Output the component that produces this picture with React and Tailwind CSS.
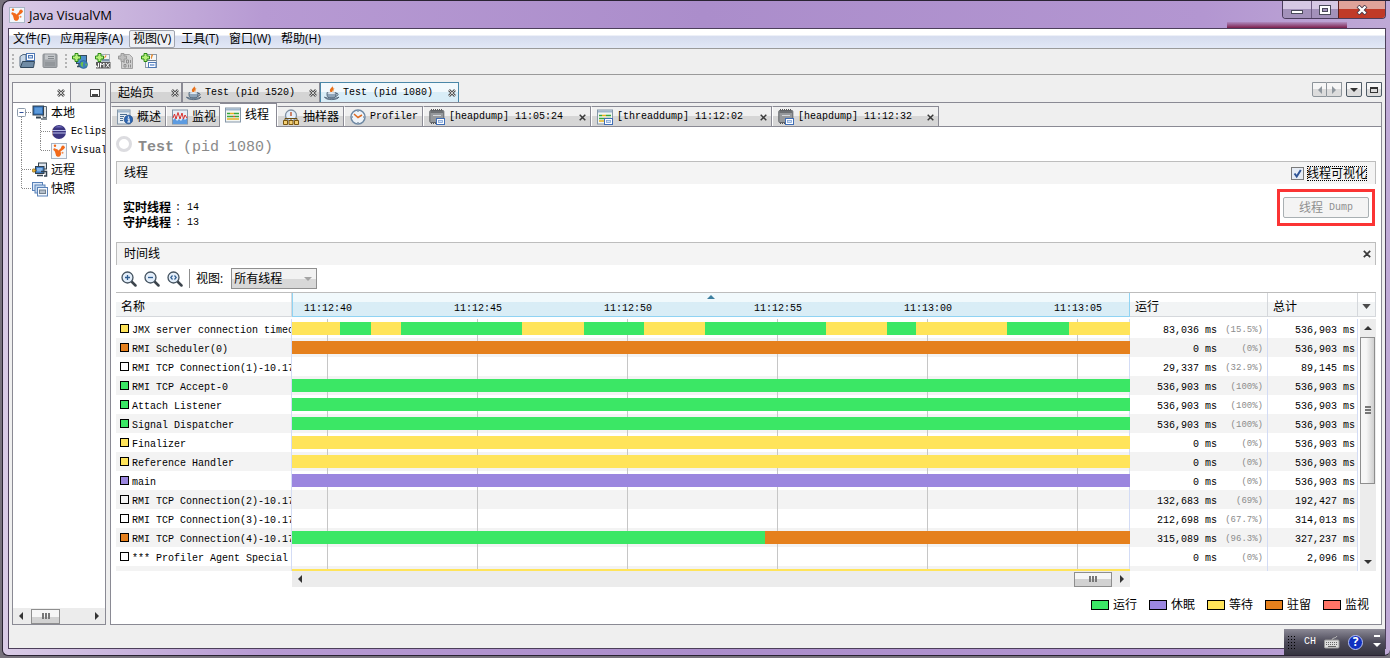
import { Fragment } from 'react';

const COLORS = {
  running: '#3be765',
  sleeping: '#9b86df',
  wait: '#ffe45a',
  park: '#e5801d',
  monitor: '#ff7466',
  none: 'transparent',
};

const JMX_SEGMENTS = [
  ['wait', 48], ['running', 31], ['wait', 30], ['running', 121], ['wait', 62], ['running', 60], ['wait', 61],
  ['running', 121], ['wait', 61], ['running', 29], ['wait', 91], ['running', 62], ['wait', 61],
];

const THREADS = [
  { name: 'JMX server connection timeout', state: 'wait', bar: JMX_SEGMENTS, run: '83,036', pct: '15.5%', total: '536,903' },
  { name: 'RMI Scheduler(0)', state: 'park', bar: [['park', 838]], run: '0', pct: '0%', total: '536,903' },
  { name: 'RMI TCP Connection(1)-10.17', state: 'none', bar: [], run: '29,337', pct: '32.9%', total: '89,145' },
  { name: 'RMI TCP Accept-0', state: 'running', bar: [['running', 838]], run: '536,903', pct: '100%', total: '536,903' },
  { name: 'Attach Listener', state: 'running', bar: [['running', 838]], run: '536,903', pct: '100%', total: '536,903' },
  { name: 'Signal Dispatcher', state: 'running', bar: [['running', 838]], run: '536,903', pct: '100%', total: '536,903' },
  { name: 'Finalizer', state: 'wait', bar: [['wait', 838]], run: '0', pct: '0%', total: '536,903' },
  { name: 'Reference Handler', state: 'wait', bar: [['wait', 838]], run: '0', pct: '0%', total: '536,903' },
  { name: 'main', state: 'sleeping', bar: [['sleeping', 838]], run: '0', pct: '0%', total: '536,903' },
  { name: 'RMI TCP Connection(2)-10.17', state: 'none', bar: [], run: '132,683', pct: '69%', total: '192,427' },
  { name: 'RMI TCP Connection(3)-10.17', state: 'none', bar: [], run: '212,698', pct: '67.7%', total: '314,013' },
  { name: 'RMI TCP Connection(4)-10.17', state: 'park', bar: [['running', 473], ['park', 365]], run: '315,089', pct: '96.3%', total: '327,237' },
  { name: '*** Profiler Agent Special', state: 'none', bar: [], run: '0', pct: '0%', total: '2,096' },
  { name: '', state: null, bar: [['wait', 838]], run: '', pct: '', total: '' },
];

const TICKS = ['11:12:40', '11:12:45', '11:12:50', '11:12:55', '11:13:00', '11:13:05'];

const LEGEND = [
  ['运行', 'running'],
  ['休眠', 'sleeping'],
  ['等待', 'wait'],
  ['驻留', 'park'],
  ['监视', 'monitor'],
];

const MENUS = ['文件(F)', '应用程序(A)', '视图(V)', '工具(T)', '窗口(W)', '帮助(H)'];

/* ---------- icons ---------- */

function Icon({ children, className = 'size-4' }) {
  return (
    <svg viewBox="0 0 16 16" className={`${className} shrink-0`} aria-hidden="true">
      {children}
    </svg>
  );
}

function VisualVmIcon() {
  return (
    <Icon>
      <rect x=".5" y=".5" width="15" height="15" fill="#f4f8fc" stroke="#a9b6c6" />
      <path d="M3 6.500L6 6l1.500 1.500L11 4l2.500 0-.5 2-3.500 2.500.5 2.500-1.500 2.500-2.500 0-1-2z" fill="#f26a1b" />
      <circle cx="4" cy="2.800" r="1.200" fill="#f26a1b" />
      <circle cx="12" cy="4.300" r="1.700" fill="#f26a1b" />
      <circle cx="7.200" cy="11" r="2.500" fill="#f26a1b" />
      <circle cx="11.500" cy="9.800" r="1" fill="#f58a4b" />
      <circle cx="3.600" cy="6.500" r="1.200" fill="#f26a1b" />
    </Icon>
  );
}

function JavaIcon() {
  return (
    <Icon>
      <path d="M8 0c2 2-3 3.500-2 6 .3 1 1 1.500 1.500 2C8 6 11 4 9 2.500z" fill="#e8701a" />
      <path d="M10.500 3c-2 1.500-2.500 3-1.500 4.500z" fill="#f0a050" />
      <path d="M3 7.500h9v2.500c0 2-1.500 3-4.500 3S3 12 3 10z" fill="#8fa5b9" stroke="#43586d" strokeWidth=".8" />
      <path d="M12 8.300c3-.5 2.500 2.700-.5 3" fill="none" stroke="#43586d" strokeWidth="1" />
      <ellipse cx="7.500" cy="8" rx="4" ry="1" fill="#dfe8f0" />
      <path d="M.500 12c1 3.500 13 3.500 14.500 0-2 1.600-12 1.800-14.500 0z" fill="#a3b6c7" stroke="#43586d" strokeWidth=".8" />
    </Icon>
  );
}

function Plus() {
  return <path d="M3 .5h3v2.500h2.500v3H6v2.500H3V6H.5V3H3z" fill="#b6f07a" stroke="#2c8a16" strokeWidth="1" />;
}

function OpenIcon() {
  return (
    <Icon>
      <path d="M1 3.500L4 1.500h3v12H1z" fill="#c6d6e6" stroke="#54697e" />
      <rect x="7.500" y=".5" width="8" height="7" fill="#fff" stroke="#4e78b5" />
      <rect x="9.500" y="2.500" width="4" height="2.500" fill="#cfe0f6" stroke="#4e78b5" />
      <path d="M1.500 14.500L3.500 8.500h12l-1 6z" fill="#6f8ba5" stroke="#30475c" />
    </Icon>
  );
}

function SaveIcon() {
  return (
    <Icon>
      <rect x="1" y="1" width="14" height="13.500" rx="1" fill="#a0a4a8" stroke="#8a8e92" />
      <rect x="3" y="1.500" width="10" height="5" fill="#c3c6c9" />
      <path d="M6 3.500h6M6 5.500h6M3 10h10M3 12h10" stroke="#858a8e" />
    </Icon>
  );
}

function AddHostIcon() {
  return (
    <Icon>
      <rect x="4.500" y="2.500" width="10" height="8" fill="#4b8ecb" stroke="#33495e" />
      <path d="M5 13.500h5M7 11v2" stroke="#33495e" strokeWidth="1.500" />
      <circle cx="11.500" cy="11.500" r="4" fill="#3d7fbd" stroke="#275a8a" strokeWidth=".6" />
      <path d="M9 9.500c2-1.500 3 0 2 1.500s1 2-.5 3c-1.500-1-2.500-2.500-1.500-4.500zM13 10.500l2 .5-1 2.500z" fill="#6cc04a" />
      <Plus />
    </Icon>
  );
}

function AddJmxIcon() {
  return (
    <Icon>
      <rect x="4.500" y="1.500" width="10" height="8" fill="#f1f4f6" stroke="#a5afb8" />
      <path d="M10.500.5c2 1.500-2 2.500-1 5 2-1.500 2.500-3 1-5z" fill="#e88a2c" />
      <path d="M7 6h7v2.500H7z" fill="#7d95ab" />
      <rect x="1" y="9" width="14.500" height="6.500" fill="#5a5a5a" />
      <path d="M3.500 10v4h-2v-1.500M5.500 14.500V10l1.800 2L9 10v4.500M11 10l3.500 4.500M14.500 10L11 14.500" stroke="#fff" fill="none" />
      <Plus />
    </Icon>
  );
}

function AddDumpIcon() {
  return (
    <Icon>
      <path d="M3.500 1.500h8l3 3v11h-11z" fill="#cfcfcf" stroke="#a3a3a3" />
      <path d="M6 7v3M8.500 7h2v3h-2zM12.500 7v3M6 11.500h2v2.500H6zM10.500 11.500v3M12.500 11.500v3" stroke="#8f8f8f" fill="none" />
      <path d="M3 .5h3v2.500h2.500v3H6v2.500H3V6H.5V3H3z" fill="#bdbdbd" stroke="#9a9a9a" />
    </Icon>
  );
}

function AddSnapshotIcon() {
  return (
    <Icon>
      <rect x="4.500" y="1.500" width="11" height="13" fill="#f4f6f8" stroke="#8a98a6" />
      <path d="M11 1.500c1.500 1-1.500 2-.5 4z" fill="#e88a2c" stroke="#e88a2c" />
      <path d="M5 7.500h10" stroke="#6f7f90" />
      <rect x="7.500" y="9.500" width="7.500" height="5" fill="#fff" stroke="#4e78b5" />
      <rect x="9.500" y="11.500" width="3.500" height="1" fill="#cfe0f6" stroke="#7fa3d8" strokeWidth=".8" />
      <Plus />
    </Icon>
  );
}

function ComputerIcon() {
  return (
    <Icon>
      <path d="M11 1.500h3.500v11H11z" fill="#dfe3e6" stroke="#5a6772" />
      <rect x="1" y="1" width="10.500" height="9" fill="#2f6bb3" stroke="#33424f" />
      <rect x="2.500" y="2.500" width="7.500" height="6" fill="#5b9adb" />
      <path d="M4 12.500h5" stroke="#33424f" strokeWidth="2" />
      <path d="M9 14h6" stroke="#5a6772" strokeWidth="1.500" />
    </Icon>
  );
}

function EclipseIcon() {
  return (
    <Icon>
      <circle cx="8" cy="8" r="7" fill="#3b3580" />
      <path d="M3 3a7 7 0 0 0 0 10C1 11 1 5 3 3z" fill="#e0a24a" />
      <path d="M1 6.500h14M1 9h14" stroke="#b9bde8" strokeWidth="1.200" />
      <path d="M4 3.500c2-2 6-2 8 0z" fill="#6d69b8" />
    </Icon>
  );
}

function RemoteIcon() {
  return (
    <Icon>
      <rect x="6.500" y="1" width="8" height="6" fill="#dfe6ee" stroke="#33424f" />
      <rect x="3.500" y="4.500" width="8.500" height="7" fill="#3b78be" stroke="#33424f" />
      <rect x="5" y="6" width="5.500" height="3.500" fill="#84b6ea" />
      <path d="M5 13.500h6M9 9.500h5.500V14H12" stroke="#33424f" strokeWidth="1.500" fill="none" />
      <path d="M.5 8.500h4" stroke="#7a5a10" />
      <circle cx="1.800" cy="8.500" r="1.700" fill="#e9b33a" stroke="#7a5a10" strokeWidth=".6" />
    </Icon>
  );
}

function SnapshotsIcon() {
  return (
    <Icon>
      <rect x=".5" y="1.500" width="10" height="8" fill="#dce9f8" stroke="#5a82b8" />
      <rect x="3" y="4" width="10" height="8" fill="#c3d8ef" stroke="#5a82b8" />
      <rect x="5.500" y="6.500" width="10" height="8.500" fill="#f4f8fd" stroke="#5a82b8" />
      <rect x="7.500" y="9" width="6" height="3.500" fill="#b5bfca" stroke="#71808f" />
    </Icon>
  );
}

function OverviewIcon() {
  return (
    <Icon>
      <rect x=".5" y="1" width="12.500" height="14" fill="#e8eef4" stroke="#8496a8" />
      <path d="M1 2.500h12" stroke="#9fb6cd" strokeWidth="2" />
      <path d="M3 5.500h7M3 7.500h4M3 9.500h3M3 11.500h3" stroke="#4a6d92" />
      <circle cx="11.500" cy="10.500" r="4.300" fill="#2c64b0" stroke="#1d4580" strokeWidth=".6" />
      <path d="M11.500 7.500v1.200M10.500 10h1.500v3M10.300 13h2.800" stroke="#fff" strokeWidth="1.200" fill="none" />
    </Icon>
  );
}

function MonitorIcon() {
  return (
    <Icon>
      <rect x=".5" y="1" width="15" height="14" fill="#e6eef6" stroke="#8496a8" />
      <path d="M1 15V11l2-2 2 3 2-2 2 2 2-3 2 2 2-2v6z" fill="#5d9be0" />
      <path d="M1 9l1.500-4L4 10l2-6.500L8 10l2-6 1.500 6 1.500-4L15 9" stroke="#d9302c" fill="none" />
    </Icon>
  );
}

function ThreadsIcon({ snapshot }) {
  return (
    <Icon>
      <rect x=".5" y="1" width="15" height="14" fill="#f3f6f3" stroke="#8496a8" />
      <path d="M1 2.500h14" stroke="#9fb6cd" strokeWidth="2" />
      <path d="M2 6.500h3M9 6.500h5M2 9.500h6M10 9.500h4" stroke="#37a63b" strokeWidth="1.500" />
      <path d="M5 6.500h4M2 12h12" stroke="#e5b322" strokeWidth="1.500" />
      <path d="M8 9.500h2" stroke="#d9532c" strokeWidth="1.500" />
      {snapshot && <SnapshotBadge />}
    </Icon>
  );
}

function SnapshotBadge() {
  return (
    <>
      <rect x="7.500" y="9.500" width="8" height="6" fill="#fff" stroke="#3f6db5" />
      <rect x="9.500" y="11.500" width="4" height="2" fill="#cfe0f6" stroke="#7fa3d8" strokeWidth=".8" />
    </>
  );
}

function SamplerIcon() {
  return (
    <Icon>
      <circle cx="8" cy="6.500" r="5.500" fill="#e3eefa" stroke="#7f8fa0" strokeWidth="1.300" />
      <path d="M8 3v4" stroke="#c04a1c" strokeWidth="1.300" />
      <path d="M2 12V9.500h12V12M8 9.500V12" stroke="#6b4e12" fill="none" />
      <path d="M.5 11.500h4v4h-4zM6 11.500h4v4H6zM11.500 11.500h4v4h-4z" fill="#f3cf73" stroke="#7a5610" />
    </Icon>
  );
}

function ProfilerIcon() {
  return (
    <Icon>
      <circle cx="8" cy="8" r="7" fill="#eef4fa" stroke="#6f89a4" strokeWidth="1.500" />
      <path d="M4 5l4 3.500L12 6" stroke="#dd6a22" strokeWidth="1.500" fill="none" />
      <path d="M8 2v1M8 13v1M2 8h1M13 8h1" stroke="#51677c" />
    </Icon>
  );
}

function HeapIcon() {
  return (
    <Icon>
      <path d="M2.500 0v2M4.500 0v2M6.500 0v2M8.500 0v2M10.500 0v2M12.500 0v2M2.500 13v2M4.500 13v2M6.500 13v2" stroke="#555" />
      <rect x=".8" y="1.500" width="14" height="12" rx="1" fill="#96999c" stroke="#606366" />
      <path d="M1.500 3h12.500" stroke="#6d7073" strokeWidth="2" />
      <path d="M4 6.500h8" stroke="#d5d8db" />
      <SnapshotBadge />
    </Icon>
  );
}

function Magnifier({ label, children }) {
  return (
    <button type="button" className="size-4" aria-label={label}>
      <Icon>
        <path d="M10.500 10.500l4 4" stroke="#3c444c" strokeWidth="2.500" strokeLinecap="round" />
        <circle cx="6.500" cy="6.500" r="5.500" fill="#e3eefa" stroke="#44525f" strokeWidth="1.300" />
        {children}
      </Icon>
    </button>
  );
}

// hatched cross used on the window-level tabs
function TabClose() {
  return (
    <svg viewBox="0 0 8 8" className="size-2 shrink-0" aria-hidden="true">
      <path d="M1 1l6 6M7 1L1 7" stroke="#555" strokeWidth="2.600" />
      <path d="M1 1l6 6M7 1L1 7" stroke="#eee" strokeWidth=".8" />
    </svg>
  );
}

function Cross({ className = 'size-[7px]' }) {
  return (
    <svg viewBox="0 0 8 8" className={`${className} shrink-0`} aria-hidden="true">
      <path d="M.8 .8l6.400 6.400M7.200 .8L.8 7.200" stroke="#3a3a3a" strokeWidth="1.700" />
    </svg>
  );
}

function Triangle({ dir, className = 'fill-[#333]' }) {
  const points = {
    left: '6,0 6,8 2,4',
    right: '2,0 2,8 6,4',
    up: '0,6 8,6 4,2',
    down: '0,2 8,2 4,6',
  }[dir];
  return (
    <svg viewBox="0 0 8 8" className={`size-2 shrink-0 ${className}`} aria-hidden="true">
      <polygon points={points} />
    </svg>
  );
}

/* ---------- shared pieces ---------- */

function Mono({ children, className = '' }) {
  return <span className={`font-['Liberation_Mono',monospace] text-[10px] ${className}`}>{children}</span>;
}

function HScrollbar({ thumb, end }) {
  return (
    <div className="flex h-4 items-center bg-[#ececec] px-1">
      <Triangle dir="left" />
      <div className={`flex min-w-0 flex-1 px-1.5 ${end ? 'justify-end' : ''}`}>
        <div className={`flex h-[15px] items-center justify-center gap-px border border-[#8e8e8e] bg-linear-to-b from-[#f6f6f6] from-50% to-[#d2d2d2] to-50% ${thumb}`}>
          <i className="h-1.5 w-0.5 bg-[#777]" />
          <i className="h-1.5 w-0.5 bg-[#777]" />
          <i className="h-1.5 w-0.5 bg-[#777]" />
        </div>
      </div>
      <Triangle dir="right" />
    </div>
  );
}

/* ---------- window chrome ---------- */

function TitleBar() {
  return (
    <header className="relative flex h-[27px] shrink-0 items-center gap-1 pl-1.5">
      <VisualVmIcon />
      <h1 className="text-[13px] leading-4">Java VisualVM</h1>
      <div className="absolute right-[43px] bottom-0 h-1.5 w-[120px] bg-linear-to-b from-[#8d4a7a]/20 to-[#7d1f4d]" />
      <div className="absolute top-0 right-1 flex h-[18px] overflow-hidden rounded-b border border-t-0 border-[#4b3c5c]">
        <button type="button" aria-label="最小化" className="flex w-7 items-center justify-center bg-linear-to-b from-[#d6c8e4] from-45% to-[#a391ba] to-50%">
          <i className="mt-1 h-1 w-3 border border-[#4a4a5a] bg-white" />
        </button>
        <button type="button" aria-label="最大化" className="flex w-[27px] items-center justify-center border-l border-[#6c5a80] bg-linear-to-b from-[#d6c8e4] from-45% to-[#a391ba] to-50%">
          <svg viewBox="0 0 12 10" className="h-2.5 w-3" aria-hidden="true">
            <rect x=".5" y=".5" width="11" height="9" fill="#fff" stroke="#4a4a5a" />
            <rect x="3.500" y="3.500" width="5" height="3" fill="#a391ba" stroke="#4a4a5a" />
          </svg>
        </button>
        <button type="button" aria-label="关闭" className="flex w-[47px] items-center justify-center border-l border-[#5c2020] bg-linear-to-b from-[#e0a39a] from-45% to-[#c03a28] to-50%">
          <svg viewBox="0 0 12 10" className="h-2.5 w-3" aria-hidden="true">
            <path d="M2 1l8 8M10 1L2 9" stroke="#4a3a4a" strokeWidth="4" />
            <path d="M2.500 1.500l7 7M9.500 1.500l-7 7" stroke="#fff" strokeWidth="2.400" />
          </svg>
        </button>
      </div>
    </header>
  );
}

function MenuBar() {
  return (
    <nav className="flex h-5 shrink-0 items-center gap-0.5 border-b border-[#9a9a9a] bg-linear-to-b from-white from-30% via-[#d5dcee] via-40% to-[#e2e8f6] leading-4">
      {MENUS.map(label => (
        <button
          key={label}
          type="button"
          className={`rounded-xs border px-[3px] whitespace-nowrap ${label === '视图(V)' ? 'border-[#a0a4ae] bg-[#eef0f5]' : 'border-transparent'}`}
        >
          {label}
        </button>
      ))}
    </nav>
  );
}

function Grip() {
  return (
    <span className="flex flex-col gap-0.5">
      {[0, 1, 2, 3].map(i => <i key={i} className="size-0.5 bg-[#b4b4b4]" />)}
    </span>
  );
}

function ToolBar() {
  return (
    <div className="flex h-[26px] shrink-0 items-center border-b border-[#9a9a9a] bg-[#efefef] pb-0.5 pl-[3px]">
      <Grip />
      <div className="ml-[5px] flex gap-[7px]">
        <button type="button" aria-label="打开"><OpenIcon /></button>
        <button type="button" aria-label="保存" disabled><SaveIcon /></button>
      </div>
      <span className="ml-[7px]"><Grip /></span>
      <div className="ml-[5px] flex gap-[7px]">
        <button type="button" aria-label="添加主机"><AddHostIcon /></button>
        <button type="button" aria-label="添加 JMX"><AddJmxIcon /></button>
        <button type="button" aria-label="添加核心 dump" disabled><AddDumpIcon /></button>
        <button type="button" aria-label="添加快照"><AddSnapshotIcon /></button>
      </div>
    </div>
  );
}

/* ---------- sidebar ---------- */

function Branch({ d, wide, box }) {
  return (
    <svg viewBox={wide ? '0 0 34 19' : '0 0 15 19'} className={`h-[19px] shrink-0 ${wide ? 'w-[34px]' : 'w-[15px]'}`} aria-hidden="true">
      <path d={d} stroke="#888" strokeDasharray="1 1" fill="none" />
      {box && <rect x=".5" y="5.500" width="8" height="8" rx="1" fill="#fff" stroke="#8d9bab" />}
      {box && <path d="M2.500 9.500h4" stroke="#2f4f9a" />}
    </svg>
  );
}

function Sidebar() {
  return (
    <aside className="flex w-[94px] shrink-0 flex-col border border-[#8a8a94] bg-white">
      <div className="flex h-5 shrink-0 border-b border-[#8a8a94] bg-[#efefef]">
        <button type="button" aria-label="关闭" className="flex w-[58px] items-center justify-end border-r border-[#8a8a94] bg-[#f7f7f7] pr-[5px]">
          <TabClose />
        </button>
        <button type="button" aria-label="最小化窗口" className="flex flex-1 items-center justify-end pr-[5px]">
          <span className="flex h-2 w-2.5 items-center justify-center border border-[#444] bg-white">
            <i className="mt-1 h-0.5 w-1.5 bg-[#444]" />
          </span>
        </button>
      </div>
      <ul className="min-h-0 flex-1 overflow-hidden pl-1 leading-[19px] whitespace-nowrap">
        <li className="flex h-[19px] items-center">
          <Branch box d="M9 9.500h6M4.500 14v5" />
          <ComputerIcon />
          <span className="ml-[3px]">本地</span>
        </li>
        <li className="flex h-[19px] items-center">
          <Branch wide d="M4.500 0v19M23.500 0v19M24 9.500h10" />
          <EclipseIcon />
          <Mono className="ml-1">Eclipse</Mono>
        </li>
        <li className="flex h-[19px] items-center">
          <Branch wide d="M4.500 0v19M23.500 0v9.500h10.500" />
          <VisualVmIcon />
          <Mono className="ml-1">VisualVM</Mono>
        </li>
        <li className="flex h-[19px] items-center">
          <Branch d="M4.500 0v19M5 9.500h10" />
          <RemoteIcon />
          <span className="ml-[3px]">远程</span>
        </li>
        <li className="flex h-[19px] items-center">
          <Branch d="M4.500 0v9.500h10.500" />
          <SnapshotsIcon />
          <span className="ml-[3px]">快照</span>
        </li>
      </ul>
      <HScrollbar thumb="w-[29px]" />
    </aside>
  );
}

/* ---------- document tabs ---------- */

function DocTab({ icon, active, width, children }) {
  return (
    <button
      type="button"
      className={`flex h-5 items-center gap-[3px] border-t border-r border-l pr-0.5 whitespace-nowrap ${width} ${
        active
          ? 'border-[#4a87a8] bg-linear-to-b from-[#f2f9fd] from-50% to-[#d9edf7] to-50%'
          : 'border-[#8a8a94] bg-linear-to-b from-[#ececec] from-50% to-[#d4d4d4] to-50%'
      }`}
    >
      {icon}
      {children}
      <span className="ml-auto"><TabClose /></span>
    </button>
  );
}

function DocTabs() {
  return (
    <div className="flex h-5 shrink-0">
      <DocTab width="w-[72px] pl-[7px]">起始页</DocTab>
      <DocTab width="w-[138px] pl-[3px]" icon={<JavaIcon />}><Mono>Test (pid 1520)</Mono></DocTab>
      <DocTab width="w-[139px] pl-[3px]" icon={<JavaIcon />} active><Mono>Test (pid 1080)</Mono></DocTab>
      <div className="ml-auto flex h-[15px] gap-1">
        <span className="flex">
          <button type="button" aria-label="上一个" className="flex w-[15px] items-center justify-center rounded-bl-xs border border-[#8d949a] bg-linear-to-b from-[#f6f6f6] from-50% to-[#dcdcdc] to-50%">
            <Triangle dir="left" className="fill-[#8f979e]" />
          </button>
          <button type="button" aria-label="下一个" className="flex w-[15px] items-center justify-center rounded-br-xs border border-l-0 border-[#8d949a] bg-linear-to-b from-[#f6f6f6] from-50% to-[#dcdcdc] to-50%">
            <Triangle dir="right" className="fill-[#8f979e]" />
          </button>
        </span>
        <button type="button" aria-label="文档列表" className="flex w-4 items-center justify-center rounded-b-xs border border-[#4f5b66] bg-linear-to-b from-[#f6f6f6] from-50% to-[#dcdcdc] to-50%">
          <Triangle dir="down" />
        </button>
        <button type="button" aria-label="最大化窗口" className="flex w-4 items-center justify-center rounded-b-xs border border-[#4f5b66] bg-linear-to-b from-[#f6f6f6] from-50% to-[#dcdcdc] to-50%">
          <i className="h-1.5 w-2 border border-t-2 border-[#333]" />
        </button>
      </div>
    </div>
  );
}

function ViewTab({ icon, active, closable, width, children }) {
  return (
    <button
      type="button"
      className={`flex items-center gap-1 border-t border-r border-[#8a8a94] pr-1 pl-[5px] whitespace-nowrap ${width} ${
        active
          ? '-mb-px h-6 bg-white pb-0.5'
          : 'h-5 border-l border-l-white bg-linear-to-b from-[#f0f0f0] from-50% to-[#d6d6d6] to-50% pt-px'
      }`}
    >
      {icon}
      {children}
      {closable && <span className="ml-auto"><Cross /></span>}
    </button>
  );
}

function ViewTabs() {
  return (
    <div className="flex h-6 shrink-0 items-end border-b border-[#8a8a94] bg-[#efefef]">
      <ViewTab width="w-[55px]" icon={<OverviewIcon />}>概述</ViewTab>
      <ViewTab width="w-[54px]" icon={<MonitorIcon />}>监视</ViewTab>
      <ViewTab width="w-[57px]" icon={<ThreadsIcon />} active>线程</ViewTab>
      <ViewTab width="w-[67px]" icon={<SamplerIcon />}>抽样器</ViewTab>
      <ViewTab width="w-[79px]" icon={<ProfilerIcon />}><Mono>Profiler</Mono></ViewTab>
      <ViewTab width="w-[168px]" icon={<HeapIcon />} closable><Mono>[heapdump] 11:05:24</Mono></ViewTab>
      <ViewTab width="w-[181px]" icon={<ThreadsIcon snapshot />} closable><Mono>[threaddump] 11:12:02</Mono></ViewTab>
      <ViewTab width="w-[167px]" icon={<HeapIcon />} closable><Mono>[heapdump] 11:12:32</Mono></ViewTab>
    </div>
  );
}

/* ---------- threads view ---------- */

function SectionHeader({ title, children }) {
  return (
    <div className="flex h-[23px] shrink-0 items-center border-x border-t border-[#bdbdbd] bg-[#f4f4f4] pl-[7px]">
      <h3 className="leading-4">{title}</h3>
      <div className="ml-auto flex items-center">{children}</div>
    </div>
  );
}

function TimelineToolbar() {
  return (
    <div className="flex h-[27px] shrink-0 items-center pl-[5px]">
      <div className="flex gap-[7px]">
        <Magnifier label="放大"><path d="M4 6.500h5M6.500 4v5" stroke="#2f5d91" strokeWidth="1.300" /></Magnifier>
        <Magnifier label="缩小"><path d="M4 6.500h5" stroke="#2f5d91" strokeWidth="1.300" /></Magnifier>
        <Magnifier label="适应窗口"><path d="M5.500 4.500L3.800 6.500l1.700 2M7.500 4.500l1.700 2-1.700 2" stroke="#2f5d91" strokeWidth="1.200" fill="none" /></Magnifier>
      </div>
      <i className="ml-1.5 h-[19px] w-px bg-[#8f8f8f]" />
      <label htmlFor="thread-filter" className="ml-1.5 leading-4">视图:</label>
      <span className="relative ml-2 flex items-center">
        <select
          id="thread-filter"
          className="h-[21px] w-[86px] appearance-none border border-[#8f8f8f] bg-linear-to-b from-[#f2f2f2] from-50% to-[#d8d8d8] to-50% pl-0.5 leading-4"
        >
          <option>所有线程</option>
        </select>
        <span className="pointer-events-none absolute right-[5px]"><Triangle dir="down" className="fill-[#a4a4a4]" /></span>
      </span>
    </div>
  );
}

const TH = 'h-6 border-r border-b border-[#d5d8dc] bg-linear-to-b from-white from-40% to-[#f2f4f5] to-40% pl-[5px] text-left leading-6 pt-0.5';

function ThreadTable() {
  return (
    <div className="flex min-h-0 flex-1 overflow-hidden border-t border-[#bdbdbd]">
      <div className="min-w-0 flex-1">
        <table className="w-full table-fixed border-separate border-spacing-0">
          <colgroup>
            <col className="w-[176px]" />
            <col />
            <col className="w-[138px]" />
            <col className="w-[90px]" />
          </colgroup>
          <thead>
            <tr>
              <th className="p-0 pb-0.5 font-normal"><div className={TH}>名称</div></th>
              <th className="p-0 pb-0.5 font-normal">
                <div className="relative flex h-6 gap-[102px] overflow-hidden border-x border-b border-[#8fd3f3] bg-linear-to-b from-[#f1f9fc] from-40% to-[#d9edf6] to-40% pt-2 pl-[11px] leading-4">
                  {TICKS.map(t => <Mono key={t} className="w-12 shrink-0">{t}</Mono>)}
                  <span className="absolute inset-x-0 top-0 flex justify-center"><Triangle dir="up" className="fill-[#3d7f9f]" /></span>
                </div>
              </th>
              <th className="p-0 pb-0.5 font-normal"><div className={TH}>运行</div></th>
              <th className="p-0 pb-0.5 font-normal"><div className={TH}>总计</div></th>
            </tr>
          </thead>
          <tbody>
            {THREADS.map((t, i) => (
              <tr key={i} className="h-[19px] odd:bg-white even:bg-[#f3f3f3]">
                <td className="border-r border-[#d3dcf5] p-0">
                  <div className="flex h-[19px] items-center gap-[3px] overflow-hidden pl-1 whitespace-nowrap">
                    {t.state && <i className="size-[9px] shrink-0 border border-black" style={{ backgroundColor: COLORS[t.state] }} />}
                    <Mono className="pt-1 leading-[15px]">{t.name}</Mono>
                  </div>
                </td>
                <td className="border-r border-[#d3dcf5] p-0">
                  <div className="h-[19px] bg-[linear-gradient(to_right,#c6c6c6_1px,transparent_1px)] bg-[length:150px_100%] bg-[position:35px_0] pt-[3px]">
                    <div className="-mr-px flex h-[13px]">
                      {t.bar.map(([state, span], j) => (
                        <i key={j} style={{ width: `${(span / 838) * 100}%`, backgroundColor: COLORS[state] }} />
                      ))}
                    </div>
                  </div>
                </td>
                <td className="border-r border-[#d3dcf5] p-0">
                  <div className="flex h-[19px] items-center justify-end pt-1 pr-1 leading-[15px]">
                    {t.run && (
                      <Fragment>
                        <Mono>{t.run} ms</Mono>
                        <span className="w-[46px] text-right font-['Liberation_Mono',monospace] text-[9px] text-[#8c8c8c]">({t.pct})</span>
                      </Fragment>
                    )}
                  </div>
                </td>
                <td className="border-r border-[#d3dcf5] p-0">
                  <div className="flex h-[19px] items-center justify-end pt-1 pr-0.5 leading-[15px]">
                    {t.total && <Mono>{t.total} ms</Mono>}
                  </div>
                </td>
              </tr>
            ))}
          </tbody>
        </table>
      </div>

      <div className="flex w-[18px] shrink-0 flex-col">
        <button type="button" aria-label="列" className="mb-0.5 flex h-6 shrink-0 items-center justify-center border-r border-b border-[#d5d8dc] bg-linear-to-b from-white from-40% to-[#f2f4f5] to-40% pt-1">
          <svg viewBox="0 0 10 6" className="h-[5px] w-[9px]" aria-hidden="true"><path d="M0 0h10L5 6z" fill="#4b4b4b" /></svg>
        </button>
        <div className="ml-0.5 flex min-h-0 flex-1 flex-col items-center bg-[#ececec] py-[5px]">
          <Triangle dir="up" />
          <div className="my-[5px] min-h-0 w-full flex-1">
            <div className="flex h-[68%] w-[15px] flex-col items-center justify-center gap-px border border-[#8e8e8e] bg-linear-to-r from-[#f6f6f6] from-40% to-[#cfcfcf]">
              <i className="h-0.5 w-1.5 bg-[#777]" />
              <i className="h-0.5 w-1.5 bg-[#777]" />
              <i className="h-0.5 w-1.5 bg-[#777]" />
            </div>
          </div>
          <Triangle dir="down" />
        </div>
      </div>
    </div>
  );
}

function Legend() {
  return (
    <div className="flex h-[37px] shrink-0 items-center justify-end gap-3 pr-[7px] pb-0.5">
      {LEGEND.map(([label, state]) => (
        <span key={state} className="flex items-center gap-1">
          <i className="h-2.5 w-[18px] border border-black" style={{ backgroundColor: COLORS[state] }} />
          <span className="leading-4">{label}</span>
        </span>
      ))}
    </div>
  );
}

function ThreadStat({ label, value }) {
  return (
    <div className="flex h-[15px] items-center gap-1.5 leading-[15px]">
      <dt className="flex items-center gap-1 font-bold">
        {label}
        <Mono className="font-normal">:</Mono>
      </dt>
      <dd className="flex"><Mono>{value}</Mono></dd>
    </div>
  );
}

function ThreadsView() {
  return (
    <div className="flex min-h-0 flex-1 flex-col bg-white px-[5px]">
      <div className="flex h-[34px] shrink-0 items-center gap-1.5">
        <i className="size-4 rounded-full border-3 border-[#dcdce0]" />
        <h2 className="pt-2 font-['Liberation_Mono',monospace] text-[15px] leading-5 text-[#8a8a8a]">
          <b>Test</b> (pid 1080)
        </h2>
      </div>

      <SectionHeader title="线程">
        <label className="mr-2 flex items-center gap-[3px] leading-[15px]">
          <span className="grid">
            <input type="checkbox" defaultChecked className="peer col-start-1 row-start-1 size-[13px] appearance-none border border-[#7a7a7a] bg-[#e6ecf5]" />
            <svg viewBox="0 0 13 13" className="pointer-events-none col-start-1 row-start-1 size-[13px] opacity-0 peer-checked:opacity-100" aria-hidden="true">
              <path d="M3.500 6.500l2.200 3L9.800 3" stroke="#2f5496" strokeWidth="2" fill="none" />
            </svg>
          </span>
          <span className="outline-1 -outline-offset-1 outline-black outline-dotted">线程可视化</span>
        </label>
      </SectionHeader>

      <div className="flex h-[58px] shrink-0 items-start justify-between pl-[7px]">
        <dl className="pt-4">
          <ThreadStat label="实时线程" value="14" />
          <ThreadStat label="守护线程" value="13" />
        </dl>
        <div className="mt-[5px] mr-px flex h-[37px] w-[98px] items-center justify-center border-3 border-[#fb3434]">
          <button type="button" disabled className="flex h-[21px] w-[86px] items-center justify-center gap-1.5 rounded-xs border border-[#a9b0b3] bg-[#f4f4f4] leading-4 text-[#8f8f8f]">
            <span>线程</span>
            <Mono>Dump</Mono>
          </button>
        </div>
      </div>

      <SectionHeader title="时间线">
        <button type="button" aria-label="关闭时间线" className="mr-1"><Cross className="size-2" /></button>
      </SectionHeader>
      <TimelineToolbar />
      <ThreadTable />
      <div className="flex shrink-0">
        <div className="w-44" />
        <div className="min-w-0 flex-1"><HScrollbar thumb="w-[38px]" end /></div>
        <div className="w-[246px]" />
      </div>
      <Legend />
    </div>
  );
}

function LanguageBar() {
  return (
    <div className="absolute right-[5px] bottom-[3px] flex h-[26px] w-[101px] items-center bg-linear-to-b from-[#8c8a96] via-[#4d4b5a] to-[#35343f] pl-1 text-white">
      <span className="grid grid-cols-3 gap-0.5">
        {Array.from({ length: 15 }, (_, i) => <i key={i} className="size-px bg-black" />)}
      </span>
      <Mono className="ml-[9px]">CH</Mono>
      <svg viewBox="0 0 16 14" className="ml-2 h-3.5 w-4" aria-hidden="true">
        <path d="M8 5c0-3 4-1 5-4" stroke="#bbb" fill="none" />
        <rect x=".5" y="5" width="14.500" height="8" rx="1" fill="#ddd" stroke="#999" />
        <path d="M2 7.500h12M2 9.500h12" stroke="#666" strokeDasharray="1 1" />
        <path d="M4 11.500h8" stroke="#666" />
      </svg>
      <span className="ml-2 flex size-[15px] items-center justify-center rounded-full border border-[#b9c4f5] bg-[#1030c0] text-xs leading-3 font-bold">?</span>
      <span className="ml-auto flex flex-col items-center gap-1 pr-1">
        <i className="h-0.5 w-1.5 bg-white" />
        <Triangle dir="down" className="fill-white" />
      </span>
    </div>
  );
}

export default function App() {
  return (
    <div className="relative flex h-screen min-h-[420px] flex-col overflow-hidden bg-[#77727c] font-['Open_Sans','Noto_Sans_CJK_SC',sans-serif] text-xs text-black">
      <div className="mb-0.5 ml-0.5 flex min-h-0 flex-1 flex-col rounded-tl-lg rounded-b-md border-y border-l border-[#2a2333] bg-[linear-gradient(to_right,#d9cbe6_0,#b79ad3_260px,#ab8dcb_700px,#b396d1_1200px,#bfa9d6_100%)]">
        <TitleBar />
        <div className="mr-1 mb-[6px] ml-[5px] flex min-h-0 flex-1 flex-col border border-[#4c3f5a] bg-[#efefef]">
          <MenuBar />
          <ToolBar />
          <div className="flex min-h-0 flex-1 gap-1 px-[3px] pt-[7px] pb-[23px]">
            <Sidebar />
            <main className="flex min-w-0 flex-1 flex-col">
              <DocTabs />
              <div className="flex min-h-0 flex-1 flex-col border border-[#8a8a94]">
                <ViewTabs />
                <ThreadsView />
              </div>
            </main>
          </div>
        </div>
      </div>
      <LanguageBar />
    </div>
  );
}
